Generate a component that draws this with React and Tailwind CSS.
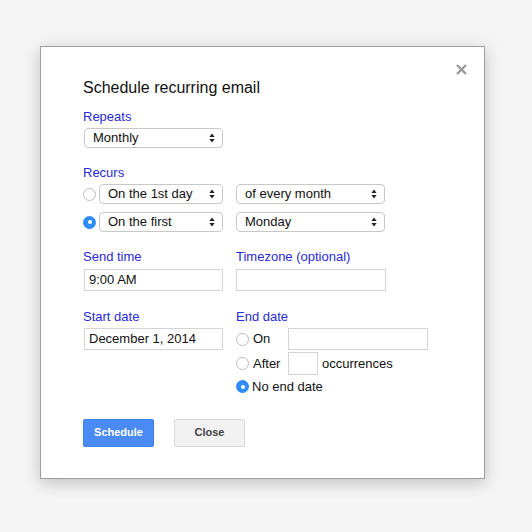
const font = { fontFamily: '"Liberation Sans", Arial, sans-serif' };

const Arrows = () => (
  <svg width="6" height="10" viewBox="0 0 6 10" className="shrink-0">
    <path d="M3 0.5 L5.6 4 H0.4 Z" fill="#222" />
    <path d="M3 9.5 L5.6 6 H0.4 Z" fill="#222" />
  </svg>
);

const Select = ({ value, className = "" }) => (
  <div
    className={`h-[20px] flex items-center justify-between pl-[8px] pr-[7px] rounded-[4px] border border-[#c8c8c8] bg-white text-[13px] text-[#111] ${className}`}
  >
    <span>{value}</span>
    <Arrows />
  </div>
);

const Input = ({ value, className = "" }) => (
  <div
    className={`h-[22px] flex items-center px-[4px] border border-[#d4d4d4] bg-white text-[13px] text-[#111] ${className}`}
  >
    {value}
  </div>
);

const Radio = ({ checked }) =>
  checked ? (
    <span className="w-[13px] h-[13px] shrink-0 rounded-full bg-[#2f8cf6] flex items-center justify-center">
      <span className="w-[4px] h-[4px] rounded-full bg-white" />
    </span>
  ) : (
    <span className="w-[13px] h-[13px] shrink-0 rounded-full border border-[#bdbdbd] bg-white" />
  );

const Label = ({ children }) => (
  <div className="text-[13px] leading-[15px] text-[#2a2ad6]">{children}</div>
);

export default function App() {
  return (
    <div className="w-[532px] h-[532px] bg-[#f5f5f5] pt-[46px] pl-[40px]" style={font}>
      <div className="relative w-[445px] h-[433px] bg-white border border-[#9e9e9e] shadow-[0_4px_16px_rgba(0,0,0,0.22)] pl-[42px] pt-[31px]">
        <svg
          className="absolute left-[415px] top-[17px]"
          width="11"
          height="11"
          viewBox="0 0 11 11"
        >
          <path d="M1 1 L10 10 M10 1 L1 10" stroke="#9a9a9a" strokeWidth="2.4" />
        </svg>

        <div className="text-[16px] leading-[19px] text-[#111]">Schedule recurring email</div>

        <div className="mt-[12px]">
          <Label>Repeats</Label>
          <Select value="Monthly" className="mt-[4px] ml-px w-[139px]" />
        </div>

        <div className="mt-[17px]">
          <Label>Recurs</Label>
          <div className="mt-[4px] flex flex-col gap-[8px]">
            <div className="flex items-center">
              <Radio />
              <Select value="On the 1st day" className="ml-[3px] w-[124px]" />
              <Select value="of every month" className="ml-[13px] w-[149px]" />
            </div>
            <div className="flex items-center">
              <Radio checked />
              <Select value="On the first" className="ml-[3px] w-[124px]" />
              <Select value="Monday" className="ml-[13px] w-[149px]" />
            </div>
          </div>
        </div>

        <div className="mt-[17px] flex">
          <div className="w-[153px]">
            <Label>Send time</Label>
            <Input value="9:00 AM" className="mt-[5px] ml-px w-[139px]" />
          </div>
          <div>
            <Label>Timezone (optional)</Label>
            <Input value="" className="mt-[5px] w-[150px]" />
          </div>
        </div>

        <div className="mt-[18px] flex">
          <div className="w-[153px]">
            <Label>Start date</Label>
            <Input value="December 1, 2014" className="mt-[4px] ml-px w-[139px]" />
          </div>
          <div className="text-[13px] text-[#111]">
            <Label>End date</Label>
            <div className="mt-[4px] flex items-center">
              <Radio />
              <span className="ml-[4px] w-[35px]">On</span>
              <Input value="" className="w-[140px]" />
            </div>
            <div className="mt-[2px] flex items-center">
              <Radio />
              <span className="ml-[4px] w-[35px]">After</span>
              <Input value="" className="w-[30px] h-[23px]" />
              <span className="ml-[4px]">occurrences</span>
            </div>
            <div className="mt-[2px] flex items-center">
              <Radio checked />
              <span className="ml-[3px]">No end date</span>
            </div>
          </div>
        </div>

        <div className="mt-[22px] flex gap-[20px]">
          <button className="w-[71px] h-[28px] rounded-[2px] bg-[#4a8af4] border border-[#3f7fe8] text-white text-[11px] font-bold">
            Schedule
          </button>
          <button className="w-[71px] h-[28px] rounded-[2px] bg-[#f2f2f2] border border-[#d8d8d8] text-[#444] text-[11px] font-bold">
            Close
          </button>
        </div>
      </div>
    </div>
  );
}
